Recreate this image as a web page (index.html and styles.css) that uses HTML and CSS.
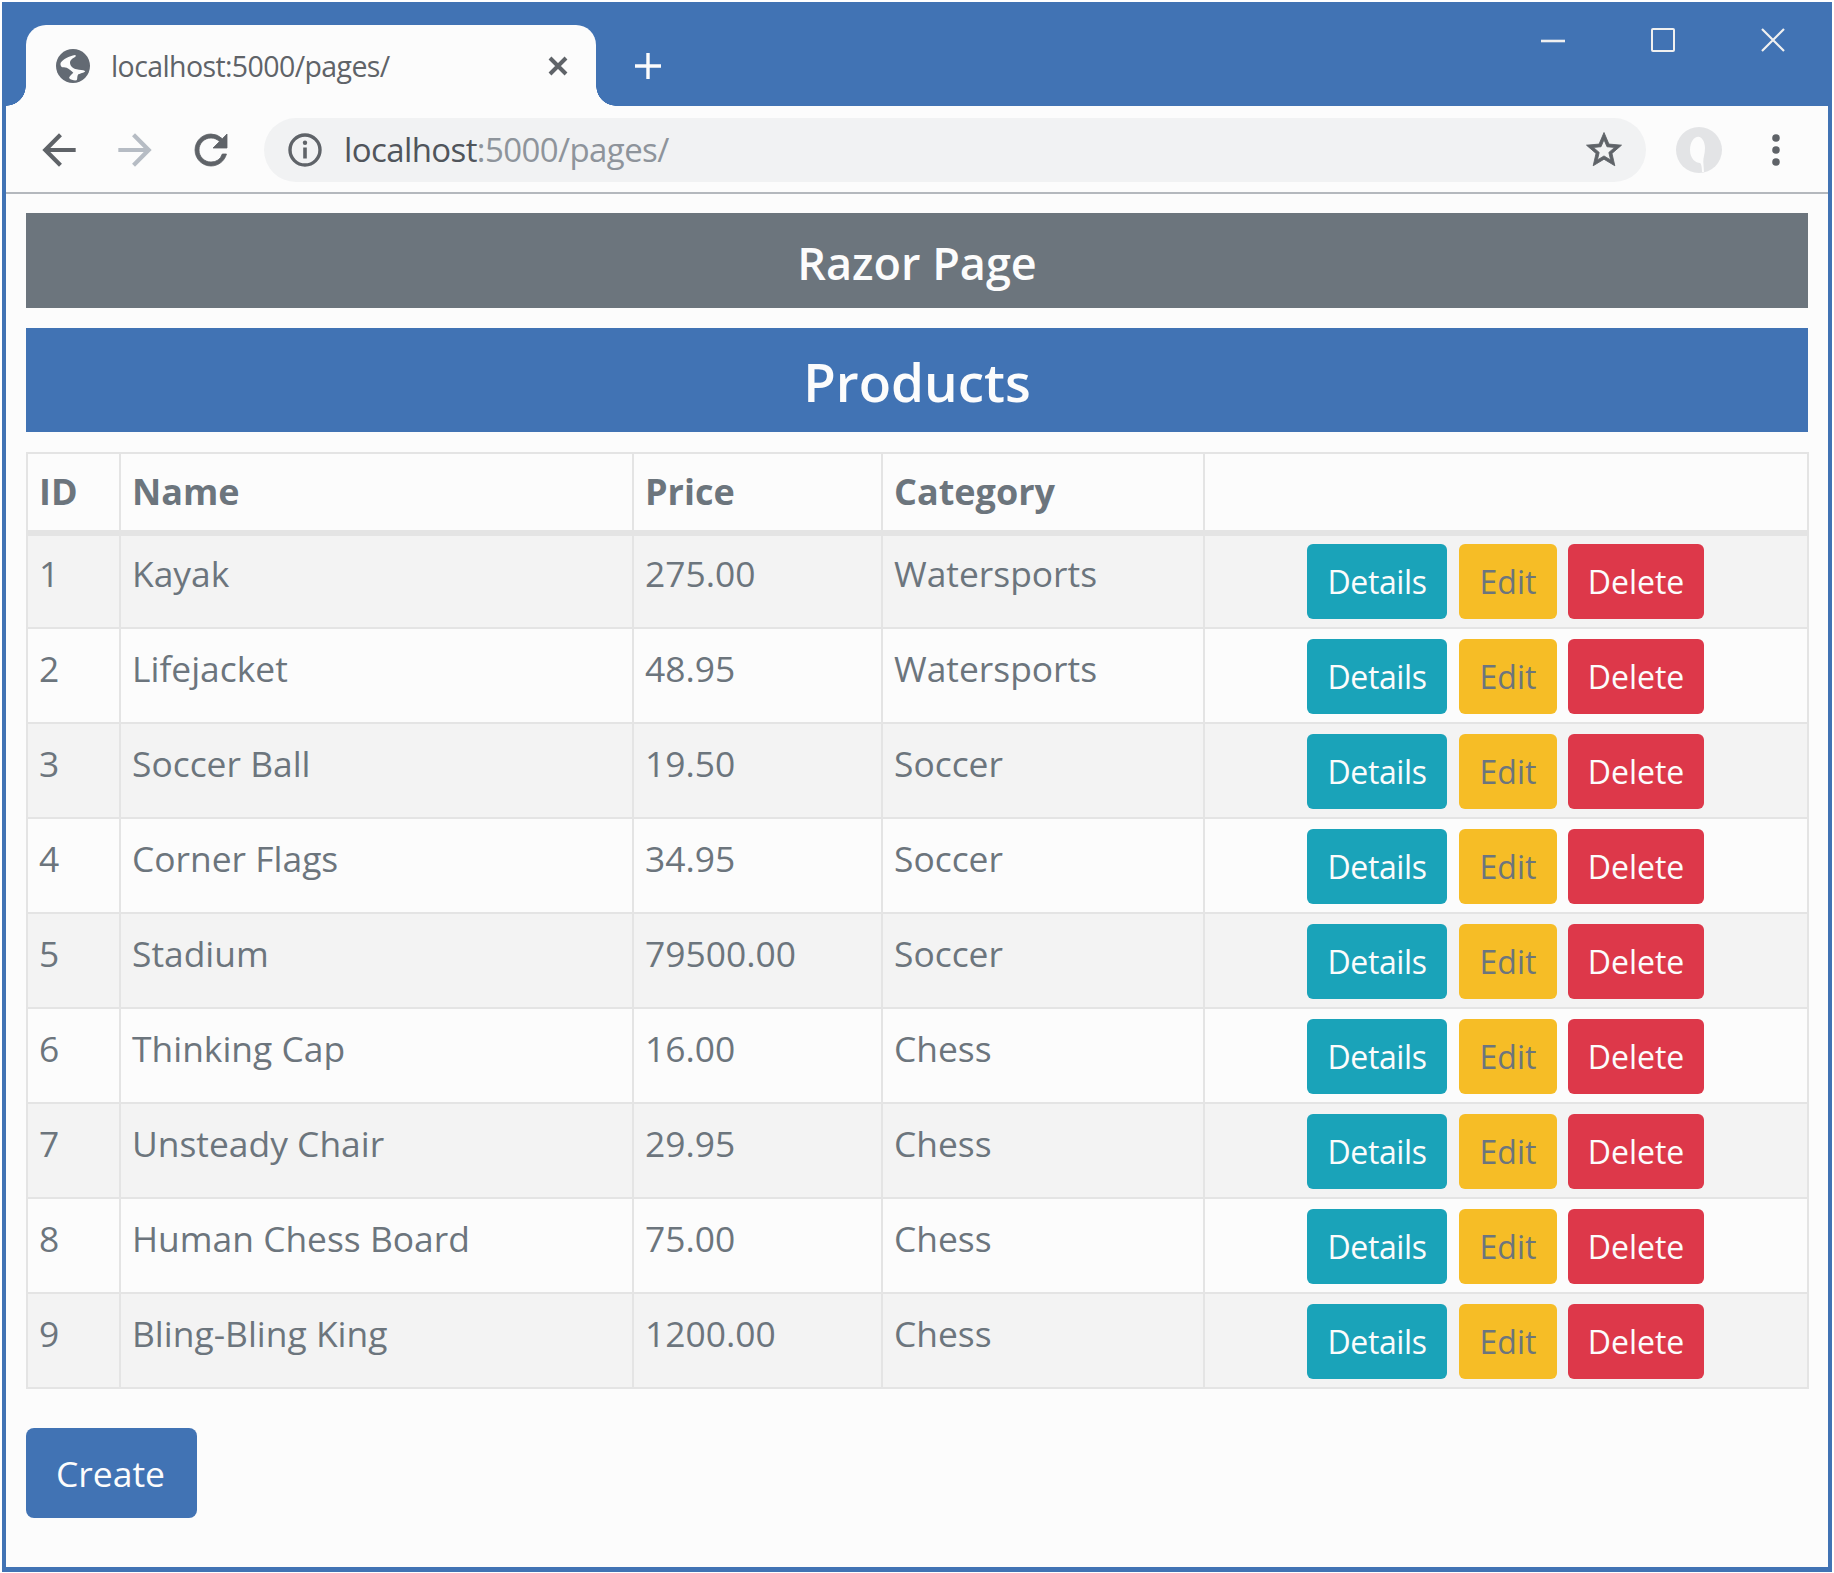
FILE: index.html
```html
<!DOCTYPE html>
<html>
<head>
    <title>localhost:5000/pages/</title>
    <link rel="stylesheet" href="styles.css">
</head>
<body>
    <div class="window">
        <div class="tabstrip">
            <div class="tab">
                <svg class="favicon" viewBox="0 0 34 34">
                    <circle cx="17" cy="17" r="17" fill="#636a73"/>
                    <path d="M4.7 13.7C7 10.5 13 7 19 6c1 0 1 1.5 0 2-2 1-5 3-5 5.7 0 3 3 6 6.7 6.6 3 .7 6.3.7 8.3 1.7 1 1-4 2.3-6.7 3.3-1.5 1.5-.6 4.7-1.6 6-2 .5-6-.3-7.4-2-.5-1.5 2-3.6 4-5.600-2-2-4.300-4-6.600-5-2-.5-4 0-5-.7-.8-1-1.700-2.600-1-4.300z" fill="#fcfcfc"/>
                </svg>
                <span class="tab-title">localhost:5000/pages/</span>
                <svg class="tab-close" viewBox="0 0 20 20">
                    <path d="M2 2l16 16M18 2L2 18" stroke="#5f6368" stroke-width="4" fill="none"/>
                </svg>
            </div>
            <svg class="new-tab" viewBox="0 0 28 28">
                <path d="M14 1v26M1 14h26" stroke="#fcfcfc" stroke-width="3.4" fill="none"/>
            </svg>
            <div class="win-controls">
                <div class="win-btn">
                    <svg viewBox="0 0 24 24" width="24" height="24"><path d="M0 13h24" stroke="#f0f0f0" stroke-width="2.6" fill="none"/></svg>
                </div>
                <div class="win-btn">
                    <svg viewBox="0 0 24 24" width="24" height="24"><rect x="1" y="1" width="22" height="22" rx="1" stroke="#f0f0f0" stroke-width="2" fill="none"/></svg>
                </div>
                <div class="win-btn">
                    <svg viewBox="0 0 24 24" width="24" height="24"><path d="M1 1l22 22M23 1L1 23" stroke="#f0f0f0" stroke-width="2.2" fill="none"/></svg>
                </div>
            </div>
        </div>

        <div class="toolbar">
            <div class="nav-btn">
                <svg viewBox="0 0 24 24" width="50" height="50"><path fill="#5f6368" d="M20 11H7.83l5.59-5.59L12 4l-8 8 8 8 1.41-1.41L7.83 13H20v-2z"/></svg>
            </div>
            <div class="nav-btn">
                <svg viewBox="0 0 24 24" width="50" height="50"><path fill="#b6bcc4" d="M4 11h12.17l-5.59-5.59L12 4l8 8-8 8-1.41-1.41L16.17 13H4v-2z"/></svg>
            </div>
            <div class="nav-btn">
                <svg viewBox="0 0 24 24" width="48" height="48"><path fill="#5f6368" stroke="#5f6368" stroke-width=".4" d="M17.65 6.35A7.958 7.958 0 0 0 12 4c-4.42 0-7.99 3.58-7.99 8s3.57 8 7.99 8c3.73 0 6.84-2.55 7.73-6h-2.08A5.99 5.99 0 0 1 12 18c-3.31 0-6-2.69-6-6s2.69-6 6-6c1.66 0 3.14.69 4.22 1.78L13 11h7V4l-2.35 2.35z"/></svg>
            </div>
            <div class="omnibox">
                <svg class="info" viewBox="0 0 34 34" width="34" height="34">
                    <circle cx="17" cy="17" r="15" stroke="#5f6368" stroke-width="3.4" fill="none"/>
                    <path d="M17 14.5v11" stroke="#5f6368" stroke-width="3.6" fill="none"/>
                    <circle cx="17" cy="9.8" r="2.2" fill="#5f6368"/>
                </svg>
                <span class="url"><span class="url-host">localhost</span>:5000/pages/</span>
                <svg class="star" viewBox="0 0 24 24" width="42" height="42"><path fill="#5f6368" stroke="#5f6368" stroke-width=".5" d="M22 9.24l-7.19-.62L12 2 9.19 8.63 2 9.24l5.46 4.73L5.82 21 12 17.27 18.18 21l-1.63-7.03L22 9.24zM12 15.4l-3.76 2.27 1-4.28-3.32-2.88 4.38-.38L12 6.1l1.71 4.04 4.38.38-3.32 2.88 1 4.28L12 15.4z"/></svg>
            </div>
            <div class="nav-btn">
                <svg class="avatar" viewBox="0 0 46 46" width="46" height="46">
                    <circle cx="23" cy="23" r="23" fill="#e3e4e6"/>
                    <path d="M22.3 9.7C26 9.7 29 15 29 21c0 6-2 10-1.700 14l.7 10h-2c0-6-1-8.500-2-9-4 0-10-4-10-13 0-8 4-13.300 8.300-13.300z" fill="#fcfcfc"/>
                </svg>
            </div>
            <div class="nav-btn">
                <svg viewBox="0 0 8 32" width="8" height="32">
                    <circle cx="4" cy="4" r="3.8" fill="#5f6368"/>
                    <circle cx="4" cy="16" r="3.8" fill="#5f6368"/>
                    <circle cx="4" cy="28" r="3.8" fill="#5f6368"/>
                </svg>
            </div>
        </div>

        <div class="page">
            <div class="banner banner-grey">Razor Page</div>
            <div class="banner banner-blue">Products</div>

            <table class="products">
                <colgroup>
                    <col class="col-id">
                    <col class="col-name">
                    <col class="col-price">
                    <col class="col-cat">
                    <col class="col-actions">
                </colgroup>
                <thead>
                    <tr>
                        <th>ID</th>
                        <th>Name</th>
                        <th>Price</th>
                        <th>Category</th>
                        <th></th>
                    </tr>
                </thead>
                <tbody>
                    <tr>
                        <td>1</td><td>Kayak</td><td>275.00</td><td>Watersports</td>
                        <td class="actions"><a class="btn btn-info">Details</a><a class="btn btn-warning">Edit</a><a class="btn btn-danger">Delete</a></td>
                    </tr>
                    <tr>
                        <td>2</td><td>Lifejacket</td><td>48.95</td><td>Watersports</td>
                        <td class="actions"><a class="btn btn-info">Details</a><a class="btn btn-warning">Edit</a><a class="btn btn-danger">Delete</a></td>
                    </tr>
                    <tr>
                        <td>3</td><td>Soccer Ball</td><td>19.50</td><td>Soccer</td>
                        <td class="actions"><a class="btn btn-info">Details</a><a class="btn btn-warning">Edit</a><a class="btn btn-danger">Delete</a></td>
                    </tr>
                    <tr>
                        <td>4</td><td>Corner Flags</td><td>34.95</td><td>Soccer</td>
                        <td class="actions"><a class="btn btn-info">Details</a><a class="btn btn-warning">Edit</a><a class="btn btn-danger">Delete</a></td>
                    </tr>
                    <tr>
                        <td>5</td><td>Stadium</td><td>79500.00</td><td>Soccer</td>
                        <td class="actions"><a class="btn btn-info">Details</a><a class="btn btn-warning">Edit</a><a class="btn btn-danger">Delete</a></td>
                    </tr>
                    <tr>
                        <td>6</td><td>Thinking Cap</td><td>16.00</td><td>Chess</td>
                        <td class="actions"><a class="btn btn-info">Details</a><a class="btn btn-warning">Edit</a><a class="btn btn-danger">Delete</a></td>
                    </tr>
                    <tr>
                        <td>7</td><td>Unsteady Chair</td><td>29.95</td><td>Chess</td>
                        <td class="actions"><a class="btn btn-info">Details</a><a class="btn btn-warning">Edit</a><a class="btn btn-danger">Delete</a></td>
                    </tr>
                    <tr>
                        <td>8</td><td>Human Chess Board</td><td>75.00</td><td>Chess</td>
                        <td class="actions"><a class="btn btn-info">Details</a><a class="btn btn-warning">Edit</a><a class="btn btn-danger">Delete</a></td>
                    </tr>
                    <tr>
                        <td>9</td><td>Bling-Bling King</td><td>1200.00</td><td>Chess</td>
                        <td class="actions"><a class="btn btn-info">Details</a><a class="btn btn-warning">Edit</a><a class="btn btn-danger">Delete</a></td>
                    </tr>
                </tbody>
            </table>

            <a class="btn-create">Create</a>
        </div>
    </div>
</body>
</html>
```

FILE: styles.css
```css
html, body {
    margin: 0;
    padding: 0;
    background-color: #ffffff;
}
body {
    font-family: "Open Sans", "Noto Sans", sans-serif;
    color: #6c757d;
}
.window {
    box-sizing: border-box;
    width: 1830px;
    height: 1570px;
    margin: 2px 0 0 2px;
    border: solid #4173b4;
    border-width: 0 4px 5px 4px;
    background-color: #fcfcfc;
    overflow: hidden;
}

/* tab strip */
.tabstrip {
    display: flex;
    height: 104px;
    background-color: #4173b4;
}
.tab {
    position: relative;
    box-sizing: border-box;
    display: flex;
    align-items: center;
    width: 570px;
    height: 81px;
    margin: 23px 0 0 20px;
    padding: 0 28px 0 30px;
    background-color: #fcfcfc;
    border-radius: 20px 20px 0 0;
}
.tab::before,
.tab::after {
    content: "";
    position: absolute;
    bottom: 0;
    width: 20px;
    height: 20px;
}
.tab::before {
    left: -20px;
    background: radial-gradient(circle at 0 0, #4173b4 19.5px, #fcfcfc 20px);
}
.tab::after {
    right: -20px;
    background: radial-gradient(circle at 100% 0, #4173b4 19.5px, #fcfcfc 20px);
}
.favicon {
    width: 34px;
    height: 34px;
    flex: none;
}
.tab-title {
    margin-left: 21px;
    font-size: 28.5px;
    letter-spacing: -0.6px;
    color: #5f6368;
}
.tab-close {
    width: 20px;
    height: 20px;
    margin-left: auto;
}
.new-tab {
    width: 28px;
    height: 28px;
    margin: 50px 0 0 38px;
}
.win-controls {
    display: flex;
    margin-left: auto;
}
.win-btn {
    display: flex;
    align-items: center;
    justify-content: center;
    width: 110px;
    height: 76px;
}

/* toolbar */
.toolbar {
    box-sizing: border-box;
    display: flex;
    align-items: center;
    height: 88px;
    padding: 1px 14px 0 15px;
    border-bottom: 2px solid #b4b8bd;
}
.nav-btn {
    display: flex;
    align-items: center;
    justify-content: center;
    width: 76px;
    height: 64px;
    flex: none;
}
.omnibox {
    display: flex;
    align-items: center;
    flex: 1;
    height: 64px;
    margin: 0 16px 0 15px;
    padding: 0 21px 0 24px;
    background-color: #f1f2f3;
    border-radius: 32px;
}
.url {
    margin-left: 22px;
    font-size: 33px;
    letter-spacing: -0.6px;
    color: #8e949b;
}
.url-host {
    color: #50555b;
}
.star {
    margin-left: auto;
}
.avatar {
    margin-right: 2px;
}

/* page */
.page {
    padding: 19px 20px 0;
}
.banner {
    box-sizing: border-box;
    display: flex;
    align-items: center;
    justify-content: center;
    padding-top: 3px;
    color: #fcfcfc;
    font-weight: 600;
}
.banner-grey {
    height: 95px;
    background-color: #6c757d;
    font-size: 45px;
}
.banner-blue {
    height: 104px;
    margin-top: 20px;
    background-color: #4173b4;
    font-size: 53px;
}
.products {
    width: 1781px;
    margin-top: 20px;
    table-layout: fixed;
    border-collapse: collapse;
    font-size: 35.4px;
}
.col-id { width: 93px; }
.col-name { width: 513px; }
.col-price { width: 249px; }
.col-cat { width: 322px; }
.col-actions { width: 604px; }
.products th,
.products td {
    box-sizing: border-box;
    padding: 15px 11px 0;
    border: 2px solid #e4e4e4;
    text-align: left;
    vertical-align: top;
}
.products th {
    height: 80px;
    padding-top: 13px;
    border-bottom-width: 6px;
    font-weight: 700;
    font-size: 36px;
}
.products td {
    height: 95px;
}
.products tbody tr:first-child td {
    padding-top: 13px;
}
.products tbody tr:nth-child(odd) {
    background-color: #f3f3f3;
}
.products td.actions {
    padding: 10px 12px 0;
    text-align: center;
    line-height: 0;
}
.products tbody tr:first-child td.actions {
    padding-top: 8px;
}
.btn {
    display: inline-block;
    box-sizing: border-box;
    height: 75px;
    margin: 0 5.5px;
    border-radius: 6px;
    font-size: 32px;
    line-height: 75px;
    color: #fcfcfc;
    vertical-align: top;
}
.btn-info {
    width: 140px;
    margin: 0 6.5px 0 4.5px;
    background-color: #1aa3b9;
    letter-spacing: -0.4px;
}
.btn-warning {
    width: 98px;
    background-color: #f6bd26;
    color: #6c757d;
}
.btn-danger {
    width: 136px;
    background-color: #dd384a;
}
.btn-create {
    display: block;
    width: 171px;
    height: 90px;
    margin-top: 39px;
    padding-right: 2px;
    box-sizing: border-box;
    background-color: #4173b4;
    border-radius: 8px;
    font-size: 35.5px;
    line-height: 90px;
    text-align: center;
    color: #fcfcfc;
}
```
